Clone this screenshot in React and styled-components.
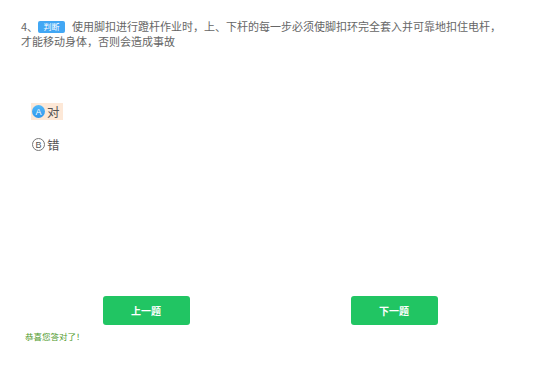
import React from "react";
import styled, { createGlobalStyle } from "styled-components";

const GlobalStyle = createGlobalStyle`
  html, body {
    margin: 0;
    padding: 0;
    background: #fff;
  }
  body {
    font-family: "Noto Sans CJK SC", "Liberation Sans", sans-serif;
  }
`;

const Page = styled.div`
  width: 557px;
  height: 370px;
  box-sizing: border-box;
  padding-top: 19px;
  display: flex;
  flex-direction: column;
`;

const Question = styled.div`
  margin-left: 21px;
  width: 490px;
  font-size: 11px;
  line-height: 15px;
  color: #666;
`;

const Num = styled.span`
  display: inline-block;
  width: 17px;
`;

const Badge = styled.span`
  display: inline-block;
  width: 27px;
  height: 12px;
  line-height: 12px;
  margin: 0 7px 0 0;
  background: #42a7f4;
  border-radius: 2px;
  color: #fff;
  font-size: 8px;
  text-align: center;
  vertical-align: 1px;
`;

const Options = styled.div`
  margin-top: 54px;
  margin-left: 31px;
  display: flex;
  flex-direction: column;
  align-items: flex-start;
  gap: 16px;
`;

const Option = styled.div`
  display: flex;
  align-items: center;
  gap: 2px;
  height: 17px;
  padding: 0 3px 0 1px;
  background: ${(p) => (p.$selected ? "#fde8d7" : "transparent")};
  font-size: 12.5px;
  color: #555;
`;

const Mark = styled.span`
  width: 13px;
  height: 13px;
  box-sizing: border-box;
  border-radius: 50%;
  display: flex;
  align-items: center;
  justify-content: center;
  font-size: 9px;
  font-family: "Liberation Sans", sans-serif;
  ${(p) =>
    p.$selected
      ? "background: linear-gradient(#52b8f8, #2f97ec); color: #fff;"
      : "border: 1px solid #777; color: #555;"}
`;

const Buttons = styled.div`
  margin-top: 143px;
  margin-left: 22px;
  width: 496px;
  display: flex;
  justify-content: space-around;
`;

const Button = styled.button`
  width: 87px;
  height: 29px;
  border: none;
  border-radius: 3px;
  background: #21c563;
  color: #fff;
  font-family: "Noto Sans CJK SC", sans-serif;
  font-size: 10px;
  font-weight: bold;
  padding: 0;
`;

const Result = styled.div`
  margin-top: 6px;
  margin-left: 25px;
  font-size: 8.5px;
  line-height: 10px;
  color: #4f9a2d;
`;

export default function App() {
  return (
    <>
      <GlobalStyle />
      <Page>
        <Question>
          <Num>4、</Num>
          <Badge>判断</Badge>
          <span>
            使用脚扣进行蹬杆作业时，上、下杆的每一步必须使脚扣环完全套入并可靠地扣住电杆，才能移动身体，否则会造成事故
          </span>
        </Question>
        <Options>
          <Option $selected>
            <Mark $selected>A</Mark>对
          </Option>
          <Option>
            <Mark>B</Mark>错
          </Option>
        </Options>
        <Buttons>
          <Button>上一题</Button>
          <Button>下一题</Button>
        </Buttons>
        <Result>恭喜您答对了！</Result>
      </Page>
    </>
  );
}
